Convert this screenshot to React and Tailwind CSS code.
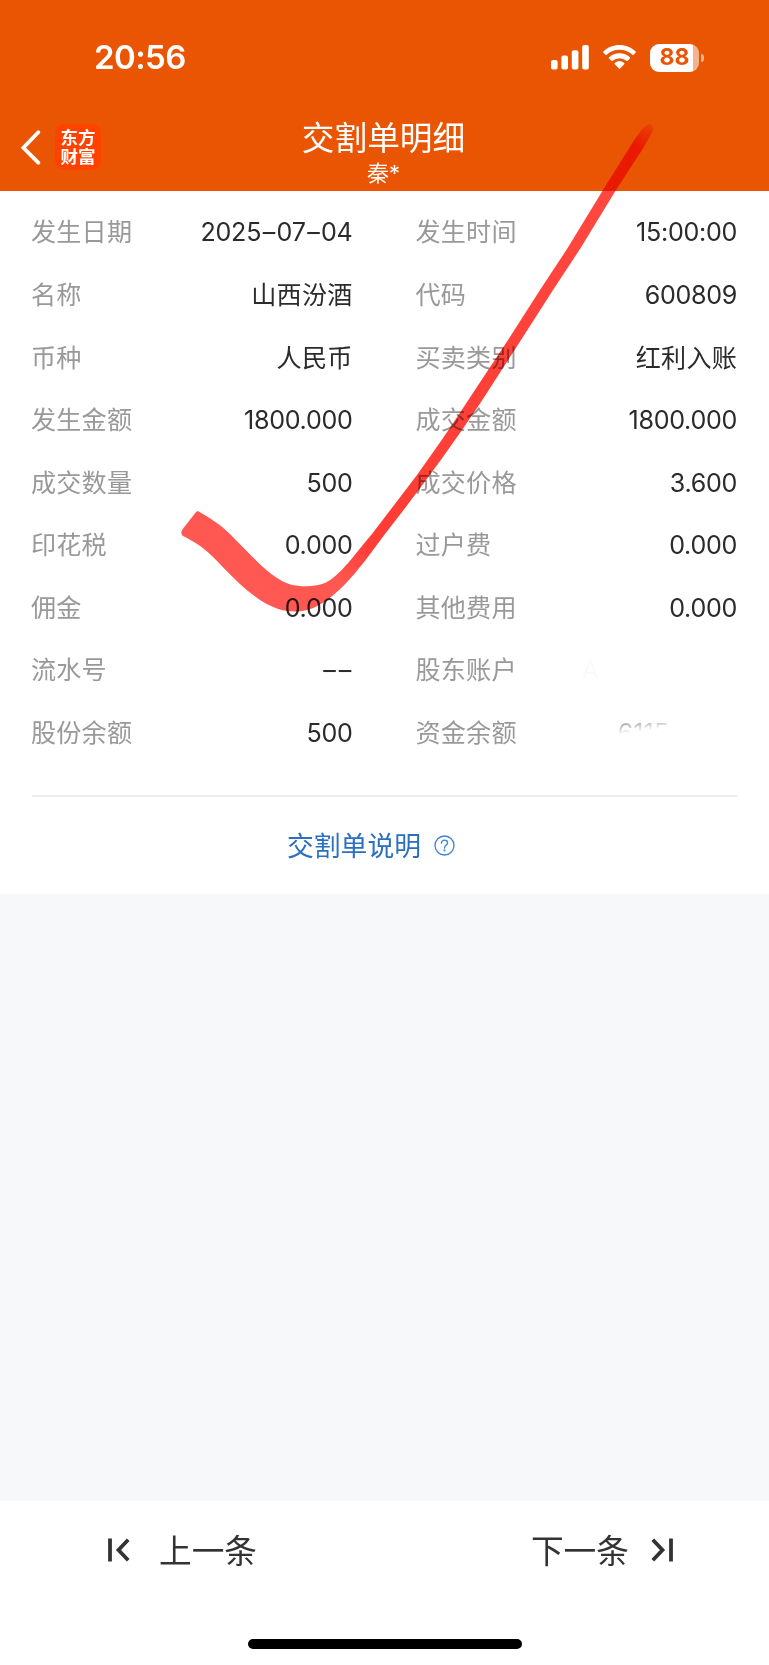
const ROWS = [
  [{ label: '发生日期', value: '2025–07–04' }, { label: '发生时间', value: '15:00:00' }],
  [{ label: '名称', value: '山西汾酒' }, { label: '代码', value: '600809' }],
  [{ label: '币种', value: '人民币' }, { label: '买卖类别', value: '红利入账' }],
  [{ label: '发生金额', value: '1800.000' }, { label: '成交金额', value: '1800.000' }],
  [{ label: '成交数量', value: '500' }, { label: '成交价格', value: '3.600' }],
  [{ label: '印花税', value: '0.000' }, { label: '过户费', value: '0.000' }],
  [{ label: '佣金', value: '0.000' }, { label: '其他费用', value: '0.000' }],
  [{ label: '流水号', value: '––' }, { label: '股东账户', value: 'A', hidden: 'account' }],
  [{ label: '股份余额', value: '500' }, { label: '资金余额', value: '6115', hidden: 'balance' }],
]

const HIDDEN_CLASS = {
  account: 'mr-[138px] text-[#fafafa]',
  balance: 'mr-[68px] bg-[linear-gradient(172deg,#b5b5b5_25%,#fff_46%)] bg-clip-text text-transparent',
}

function StatusBar() {
  return (
    <div className="flex h-[115px] items-center justify-between pl-[94px] pr-[65px]">
      <span className="text-[33px] font-semibold leading-none tracking-[-0.6px]">20:56</span>
      <div className="flex items-center">
        <svg width="38" height="25" viewBox="0 0 38 25" fill="currentColor">
          <rect x="0" y="15" width="6.6" height="9.5" rx="2" />
          <rect x="10.4" y="10.5" width="6.6" height="14" rx="2" />
          <rect x="20.8" y="5.3" width="6.6" height="19.2" rx="2" />
          <rect x="31.2" y="0" width="6.6" height="24.5" rx="2" />
        </svg>
        <svg className="ml-[14px]" width="33" height="25" viewBox="0 0 33 25" fill="currentColor">
          <path d="M16.5 0C22.7 0 28.4 2.4 32.6 6.4c.4.4.4.9 0 1.3l-2 2.1c-.4.4-.9.4-1.3 0A18.6 18.6 0 0 0 3.7 9.8c-.4.4-.9.4-1.3 0l-2-2.1c-.4-.4-.4-.9 0-1.3C4.6 2.4 10.3 0 16.5 0z" />
          <path d="M16.5 8.2c4 0 7.6 1.5 10.4 4.1.4.4.4.9 0 1.3l-2.2 2.2c-.4.4-.9.4-1.3 0a10.3 10.3 0 0 0-13.8 0c-.4.4-.9.4-1.3 0l-2.2-2.2c-.4-.4-.4-.9 0-1.3 2.8-2.6 6.4-4.1 10.4-4.1z" />
          <path d="M16.5 16.3c1.8 0 3.4.6 4.7 1.7.4.4.4.9 0 1.3l-4.1 4.3c-.4.4-.8.4-1.2 0l-4.1-4.3c-.4-.4-.4-.9 0-1.3 1.3-1.1 2.9-1.7 4.7-1.7z" />
        </svg>
        <div className="ml-[14px] flex items-center">
          <div className="flex h-7 w-[49px] items-center justify-center rounded-[9px] bg-[linear-gradient(90deg,#fff_88%,#f5b38d_88%)] text-[23px] font-bold leading-none text-[#ea5504]">
            88
          </div>
          <div className="ml-[2px] h-2 w-[3px] rounded-r-full bg-[#f5b38d]" />
        </div>
      </div>
    </div>
  )
}

function Header() {
  return (
    <header className="h-[191px] bg-[#ea5504] text-white">
      <StatusBar />
      <div className="grid h-[76px] grid-cols-[1fr_auto_1fr]">
        <div className="flex items-start gap-[13px] pl-5 pt-[9px]">
          <svg className="mt-[6px]" width="22" height="35" viewBox="0 0 22 35" fill="none" stroke="currentColor" strokeWidth="3.8" strokeLinecap="round">
            <path d="M18.3 2.3 3.4 17.8l14.9 14.9" />
          </svg>
          <div className="flex h-[46px] w-[46px] flex-col items-center justify-center rounded-[9px] bg-[#ff4200] text-[17.5px] font-bold leading-[19.5px]">
            <span>东方</span>
            <span>财富</span>
          </div>
        </div>
        <div className="flex flex-col items-center pr-[2px] pt-[5px]">
          <h1 className="text-[32.7px] leading-[36px]">交割单明细</h1>
          <p className="mt-[3px] text-[22px] leading-[28px]">秦*</p>
        </div>
        <div />
      </div>
    </header>
  )
}

function Value({ text }) {
  const numeric = /^[\d.:–]+$/.test(text)
  return (
    <span className={`text-[#2b2b2b] ${numeric ? 'tracking-[-0.3px]' : 'tracking-[0.2px]'}`}>
      {text.split('').map((ch, i) =>
        ch === '–' ? <span key={i} className="inline-block w-[15.5px] text-center">{ch}</span> : ch
      )}
    </span>
  )
}

function Field({ label, value, hidden }) {
  return (
    <div className="flex h-[62.56px] items-center justify-between text-[25.1px] leading-[36px]">
      <span className="-ml-px tracking-[0.2px] text-[#999]">{label}</span>
      {hidden ? <span className={HIDDEN_CLASS[hidden]}>{value}</span> : <Value text={value} />}
    </div>
  )
}

// hand-drawn red marker tick over the page
function MarkerTick() {
  return (
    <svg className="pointer-events-none absolute left-0 top-0 mix-blend-multiply" width="769" height="700" viewBox="0 0 769 700">
      <defs>
        <linearGradient id="marker" gradientUnits="userSpaceOnUse" x1="180" y1="612" x2="480" y2="124">
          <stop offset="0" stopColor="#ff5b55" />
          <stop offset="0.19" stopColor="#ff5852" />
          <stop offset="0.27" stopColor="#ff3d35" />
          <stop offset="0.7" stopColor="#ff4239" />
          <stop offset="1" stopColor="#ff483f" />
        </linearGradient>
        <linearGradient id="tip" gradientUnits="userSpaceOnUse" x1="636" y1="146" x2="652" y2="122">
          <stop offset="0" stopColor="#fff" />
          <stop offset="1" stopColor="#fff" stopOpacity="0.25" />
        </linearGradient>
        <mask id="tip-fade" maskUnits="userSpaceOnUse" x="0" y="0" width="769" height="700">
          <rect width="769" height="700" fill="url(#tip)" />
        </mask>
        <filter id="soft">
          <feGaussianBlur stdDeviation="0.7" />
        </filter>
      </defs>
      <g mask="url(#tip-fade)">
        <path
          fill="url(#marker)"
          filter="url(#soft)"
          d="M198 511 C210 518 221 525 231 535 C250 554 272 580 292 585 C304 587 314 587 325 583 C340 576 355 554 372 534 L417 475 C434 451 451 427 467 402 L508 340 L540 290 L567 249 L603 190 L628 150 C636 137 643 126 649 124 C653 124 654 128 652 133 L642 150 L616 190 L580 249 L553 290 L521 340 L481 402 C451 447 418 492 385 534 C365 561 346 588 324 602 C307 614 288 614 271 606 C249 596 231 575 212 556 C202 546 191 540 183 536 C181 534 181 532 182 530 L196 512 Z"
        />
      </g>
    </svg>
  )
}

export default function App() {
  return (
    <div className="relative isolate flex h-[1665px] w-[769px] flex-col overflow-hidden bg-[#f7f8fa] font-['Inter','Noto_Sans_CJK_SC',sans-serif]">
      <Header />

      <main className="h-[703px] bg-white px-8 pt-[10.2px]">
        {ROWS.map(([left, right]) => (
          <div key={left.label} className="grid grid-cols-2 gap-x-16">
            <Field {...left} />
            <Field {...right} />
          </div>
        ))}
        <div className="mt-[30.8px] h-[2px] bg-[#ececec]" />
        <div className="flex h-[98px] items-center pl-[255px] text-[#2a6fc0]">
          <span className="text-[26.8px] leading-[38px]">交割单说明</span>
          <svg className="ml-[13px]" width="21" height="21" viewBox="0 0 21 21" fill="none" stroke="#3a82dc" strokeWidth="1.3" strokeLinecap="round">
            <circle cx="10.5" cy="10.5" r="9.5" />
            <path d="M7.4 8.2c0-1.9 1.3-3 3.1-3s3.1 1.1 3.1 2.8c0 2.3-3.1 2.4-3.1 5" />
            <circle cx="10.5" cy="15.4" r="0.4" />
          </svg>
        </div>
      </main>

      <footer className="mt-auto flex h-[164px] flex-col bg-white text-[#333]">
        <div className="flex h-[98px] items-center justify-between pl-[108px] pr-[96px] text-[32.7px]">
          <button className="flex items-center gap-[29px]">
            <svg width="22" height="24" viewBox="0 0 22 24" fill="none" stroke="currentColor" strokeWidth="3.8">
              <path d="M2 .5v23M20.2 1.7 10.5 12l9.7 10.3" />
            </svg>
            <span className="pt-[3px]">上一条</span>
          </button>
          <button className="flex items-center gap-[22px]">
            <span className="pt-[3px]">下一条</span>
            <svg width="22" height="24" viewBox="0 0 22 24" fill="none" stroke="currentColor" strokeWidth="3.8">
              <path d="M20 .5v23M1.8 1.7 11.5 12l-9.7 10.3" />
            </svg>
          </button>
        </div>
        <div className="mx-auto mt-10 h-[10px] w-[274px] rounded-full bg-black" />
      </footer>

      <MarkerTick />
    </div>
  )
}
